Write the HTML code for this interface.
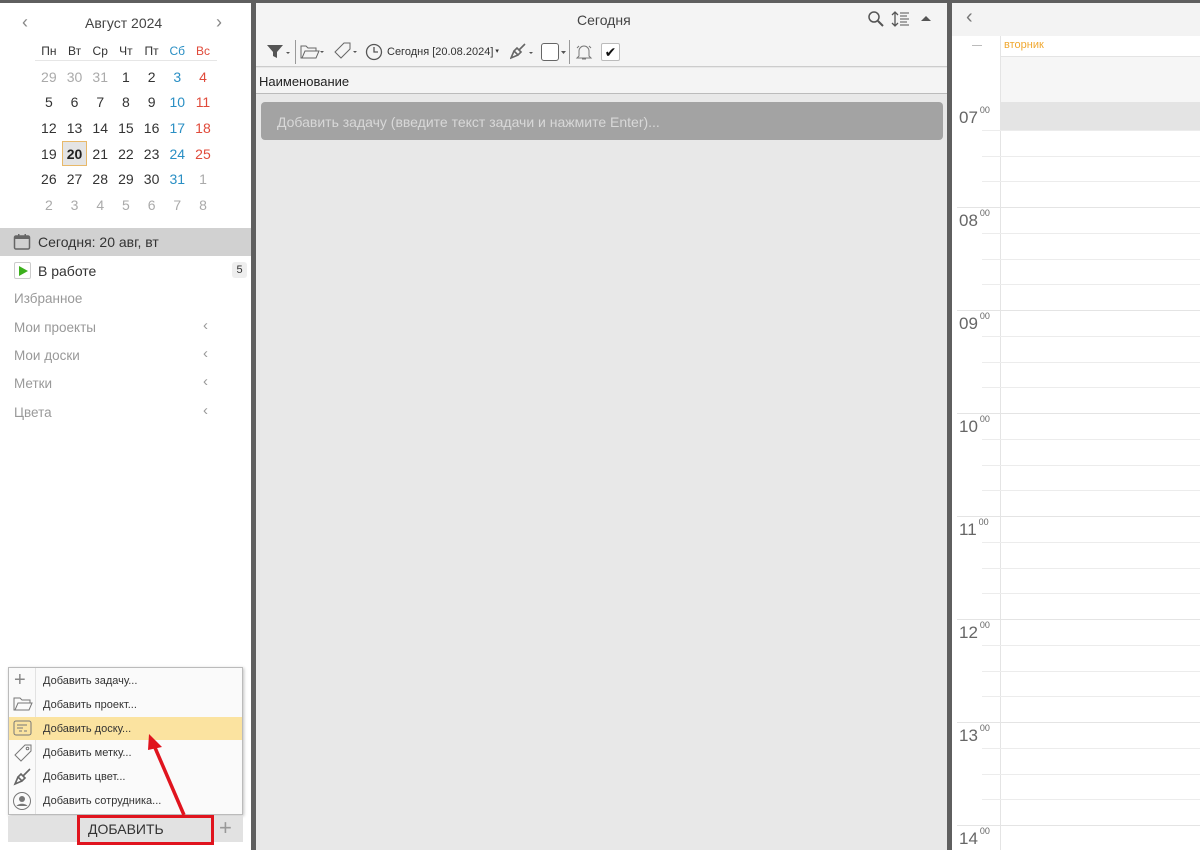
<!DOCTYPE html>
<html style="width:1200px;height:850px;overflow:hidden"><head><meta charset="utf-8"><style>
*{margin:0;padding:0;box-sizing:border-box}
body{width:1200px;height:850px;background:#5f5f5f;font-family:"Liberation Sans","DejaVu Sans",sans-serif;position:relative;overflow:hidden;color:#333}
.a{position:absolute}
.cal td{width:25.7px;height:25.7px;text-align:center;font-size:14px;color:#333}
.g{color:#aaa!important}.b{color:#2a8fc4!important}.r{color:#e04a3a!important}
.nav{font-size:13.5px;color:#999;left:14px}
.chev{left:203px;color:#999;font-size:15px}
.mi{left:43px;font-size:11px;color:#333}
.hl{font-size:17px;color:#666;left:959px}
.hl sup{font-size:9px;vertical-align:top;position:relative;top:-3px;margin-left:2px}
</style></head><body>
<div class="a" style="left:0;top:3px;width:251px;height:847px;background:#fff"></div>
<div class="a" style="left:22px;top:12px;color:#888;font-size:18px">‹</div>
<div class="a" style="left:216px;top:12px;color:#888;font-size:18px">›</div>
<div class="a" style="left:85px;top:15px;font-size:14px;color:#444">Август 2024</div>
<div class="a" style="left:35px;top:60px;width:182px;height:1px;background:#e6e6e6"></div>
<table class="a cal" style="left:36px;top:38px;border-collapse:collapse">
<tr style="height:24px"><td style="font-size:12px;height:24px">Пн</td><td style="font-size:12px">Вт</td><td style="font-size:12px">Ср</td><td style="font-size:12px">Чт</td><td style="font-size:12px">Пт</td><td class="b" style="font-size:12px">Сб</td><td class="r" style="font-size:12px">Вс</td></tr>
<tr><td class="g">29</td><td class="g">30</td><td class="g">31</td><td>1</td><td>2</td><td class="b">3</td><td class="r">4</td></tr>
<tr><td>5</td><td>6</td><td>7</td><td>8</td><td>9</td><td class="b">10</td><td class="r">11</td></tr>
<tr><td>12</td><td>13</td><td>14</td><td>15</td><td>16</td><td class="b">17</td><td class="r">18</td></tr>
<tr><td>19</td><td style="background:#e4e4e4;outline:1px solid #e8b96a;outline-offset:-1px;font-weight:bold;color:#222">20</td><td>21</td><td>22</td><td>23</td><td class="b">24</td><td class="r">25</td></tr>
<tr><td>26</td><td>27</td><td>28</td><td>29</td><td>30</td><td class="b">31</td><td class="g">1</td></tr>
<tr><td class="g">2</td><td class="g">3</td><td class="g">4</td><td class="g">5</td><td class="g">6</td><td class="g">7</td><td class="g">8</td></tr>
</table>
<div class="a" style="left:0;top:228px;width:251px;height:28px;background:#d1d1d1"></div>
<svg class="a" style="left:13px;top:233px" width="18" height="18"><rect x="1.5" y="3" width="15" height="13" rx="1.5" fill="none" stroke="#666" stroke-width="1.5"/><rect x="1.5" y="3" width="15" height="3" fill="#666"/><rect x="5" y="1" width="1.5" height="4" fill="#666"/><rect x="11.5" y="1" width="1.5" height="4" fill="#666"/></svg>
<div class="a" style="left:38px;top:234px;font-size:14px;color:#333">Сегодня: 20 авг, вт</div>
<div class="a" style="left:14px;top:262px;width:17px;height:17px;border:1px solid #ccc;border-radius:2px"></div>
<svg class="a" style="left:17px;top:265px" width="12" height="12"><path d="M2 1L11 6L2 11Z" fill="#3cb01c"/></svg>
<div class="a" style="left:38px;top:263px;font-size:14px;color:#333">В работе</div>
<div class="a" style="left:232px;top:262px;width:15px;height:16px;background:#eee;border-radius:3px;font-size:11px;text-align:center;line-height:16px">5</div>
<div class="a nav" style="top:291px">Избранное</div>
<div class="a nav" style="top:320px">Мои проекты</div><div class="a chev" style="top:317px">‹</div>
<div class="a nav" style="top:348px">Мои доски</div><div class="a chev" style="top:345px">‹</div>
<div class="a nav" style="top:376px">Метки</div><div class="a chev" style="top:373px">‹</div>
<div class="a nav" style="top:405px">Цвета</div><div class="a chev" style="top:402px">‹</div>
<div class="a" style="left:8px;top:667px;width:235px;height:148px;background:#fafafa;border:1px solid #bbb;box-shadow:1px 1px 3px rgba(0,0,0,.25)"></div>
<div class="a" style="left:35px;top:668px;width:1px;height:146px;background:#e2e2e2"></div>
<div class="a" style="left:9px;top:717px;width:233px;height:23px;background:#fbe3a0"></div>
<div class="a" style="left:14px;top:670px;color:#888;font-size:20px;line-height:20px">+</div>
<svg class="a" style="left:13px;top:696px" width="20" height="16"><path d="M1 2h6l2 2h8v3H5L2 14H1z M5 7h14l-3 7H2" fill="none" stroke="#777"/></svg>
<svg class="a" style="left:13px;top:720px" width="20" height="17"><rect x="1" y="1" width="17" height="14" rx="2" fill="none" stroke="#777"/><path d="M4 5h10M4 8h6M6 11h3M11 11h3" stroke="#777"/></svg>
<svg class="a" style="left:13px;top:744px" width="20" height="18"><path d="M12 1h6v6L8 17 2 11z" fill="none" stroke="#777"/><circle cx="14.5" cy="4.5" r="1.3" fill="none" stroke="#777"/></svg>
<svg class="a" style="left:13px;top:768px" width="20" height="18"><path d="M17 1L10 8M12 10l-4-4-3 3 4 4zM5 9l-3 7 7-3" fill="none" stroke="#666" stroke-width="1.6"/></svg>
<svg class="a" style="left:12px;top:791px" width="20" height="20"><circle cx="10" cy="10" r="8.5" fill="none" stroke="#777"/><circle cx="10" cy="8" r="3" fill="#777"/><path d="M4.5 15c2-3 9-3 11 0" fill="#777"/></svg>
<div class="a mi" style="top:675px">Добавить задачу...</div>
<div class="a mi" style="top:699px">Добавить проект...</div>
<div class="a mi" style="top:723px">Добавить доску...</div>
<div class="a mi" style="top:747px">Добавить метку...</div>
<div class="a mi" style="top:771px">Добавить цвет...</div>
<div class="a mi" style="top:795px">Добавить сотрудника...</div>
<div class="a" style="left:8px;top:816px;width:235px;height:26px;background:#e2e2e2"></div>
<div class="a" style="left:77px;top:815px;width:137px;height:30px;border:3px solid #e0141e"></div>
<div class="a" style="left:88px;top:821px;font-size:14px;color:#333">ДОБАВИТЬ</div>
<div class="a" style="left:219px;top:815px;font-size:22px;color:#999;line-height:26px">+</div>
<svg class="a" style="left:140px;top:730px" width="60" height="90"><path d="M44 85L13 13" stroke="#e0141e" stroke-width="3.5"/><path d="M9 4L22 17L8 20Z" fill="#e0141e"/></svg>
<div class="a" style="left:256px;top:3px;width:691px;height:847px;background:#e8e8e8"></div>
<div class="a" style="left:256px;top:3px;width:691px;height:64px;background:#f4f4f4;border-bottom:1px solid #ccc"></div>
<div class="a" style="left:577px;top:12px;font-size:14px;color:#444">Сегодня</div>
<svg class="a" style="left:867px;top:10px" width="18" height="18"><circle cx="7" cy="7" r="5" fill="none" stroke="#555" stroke-width="1.5"/><path d="M11 11l5 5" stroke="#555" stroke-width="2"/></svg>
<svg class="a" style="left:891px;top:10px" width="20" height="18"><path d="M4 2v14M1 5l3-3 3 3M1 13l3 3 3-3" fill="none" stroke="#555" stroke-width="1.3"/><path d="M9 3h9M9 6h7M9 9h9M9 12h7M9 15h9" stroke="#555"/></svg>
<svg class="a" style="left:921px;top:15px" width="10" height="6"><path d="M0 6L5 1L10 6Z" fill="#555"/></svg>
<svg class="a" style="left:266px;top:43px" width="26" height="18"><path d="M1 2h16l-6 7v6l-4-2V9z" fill="#555"/><path d="M20 9h4l-2 2z" fill="#555"/></svg>
<div class="a" style="left:295px;top:40px;width:1px;height:24px;background:#999"></div>
<svg class="a" style="left:300px;top:44px" width="26" height="16"><path d="M1 2h5l2 2h8v3H5L2 14H1z M5 7h14l-3 7H2" fill="none" stroke="#666"/><path d="M20 7h4l-2 2z" fill="#555"/></svg>
<svg class="a" style="left:333px;top:42px" width="26" height="20"><path d="M11 1h6v6L8 16 2 10z" fill="none" stroke="#666"/><path d="M20 9h4l-2 2z" fill="#555"/></svg>
<svg class="a" style="left:365px;top:43px" width="18" height="18"><circle cx="9" cy="9" r="7.5" fill="none" stroke="#555" stroke-width="1.3"/><path d="M9 4v5h4" fill="none" stroke="#555" stroke-width="1.3"/></svg>
<div class="a" style="left:387px;top:46px;font-size:11px;color:#333">Сегодня [20.08.2024]<span style="font-size:7px;vertical-align:2px"> ▾</span></div>
<svg class="a" style="left:510px;top:43px" width="24" height="18"><path d="M15 1L9 7M11 9l-4-4-3 3 4 4zM4 8l-3 7 7-3" fill="none" stroke="#666" stroke-width="1.6"/><path d="M19 9h4l-2 2z" fill="#555"/></svg>
<div class="a" style="left:541px;top:43px;width:18px;height:18px;border:1.5px solid #666;border-radius:3px;background:#fff"></div>
<svg class="a" style="left:561px;top:51px" width="5" height="3"><path d="M0 0h5L2.5 3z" fill="#555"/></svg>
<div class="a" style="left:569px;top:40px;width:1px;height:24px;background:#999"></div>
<svg class="a" style="left:575px;top:43px" width="18" height="18"><path d="M4 13V8a5 5 0 0110 0v5l2 2H2z M7 16h4" fill="none" stroke="#777"/><path d="M2 5l2-2M16 5l-2-2" stroke="#777"/></svg>
<div class="a" style="left:601px;top:43px;width:19px;height:18px;border:1px solid #bbb;border-radius:2px;background:#fff;font-size:14px;text-align:center;line-height:17px;color:#111">✔</div>
<div class="a" style="left:256px;top:68px;width:691px;height:26px;background:#f4f4f4;border-bottom:1px solid #bbb"></div>
<div class="a" style="left:259px;top:74px;font-size:13px;color:#222">Наименование</div>
<div class="a" style="left:261px;top:102px;width:682px;height:38px;background:#a3a3a3;border-radius:4px"></div>
<div class="a" style="left:277px;top:114px;font-size:14px;color:#d8d8d8">Добавить задачу (введите текст задачи и нажмите Enter)...</div>
<div class="a" style="left:952px;top:3px;width:248px;height:847px;background:#fff;overflow:hidden">
<div class="a" style="left:0;top:0;width:248px;height:33px;background:#f3f3f3"></div>
<div class="a" style="left:14px;top:3px;font-size:20px;color:#777">‹</div>
<div class="a" style="left:20px;top:42px;width:10px;height:1px;background:#bbb"></div>
<div class="a" style="left:52px;top:36px;font-size:11px;color:#f0a830">вторник</div>
<div class="a" style="left:48px;top:53px;width:200px;height:1px;background:#e4e4e4"></div>
<div class="a" style="left:48px;top:54px;width:200px;height:45px;background:#f6f6f6"></div>
<div class="a" style="left:48px;top:99px;width:200px;height:28px;background:#e4e4e4"></div>
<div class="a" style="left:48px;top:33px;width:1px;height:814px;background:#e4e4e4"></div>
<div id="grid"></div>
</div>
<script>
var h='';var hours=['07','08','09','10','11','12','13','14'];
for(var i=0;i<8;i++){var y=101+i*103;
if(i>0)h+='<div class="a" style="left:5px;top:'+y+'px;width:243px;height:1px;background:#e4e4e4"></div>';
h+='<div class="a" style="font-size:17px;color:#666;left:7px;top:'+(y+4)+'px">'+hours[i]+'<sup style="font-size:9px;vertical-align:top;position:relative;top:-3px;margin-left:2px">00</sup></div>';
for(var q=1;q<4;q++){var yy=Math.round(y+q*25.75);if(yy<847)h+='<div class="a" style="left:30px;top:'+yy+'px;width:218px;height:1px;background:#ececec"></div>';}}
document.getElementById('grid').innerHTML=h;
</script>
</body></html>
